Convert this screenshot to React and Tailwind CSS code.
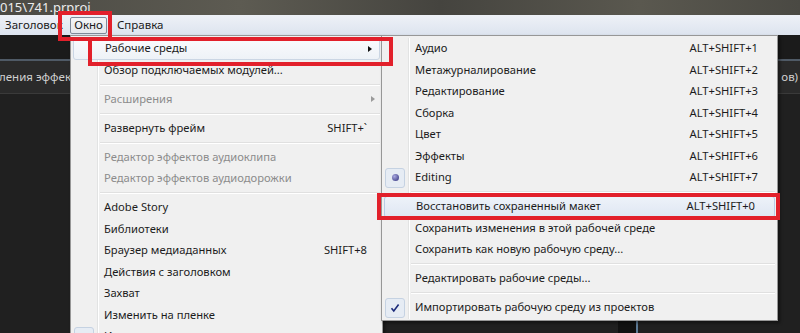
import React from 'react'

const mainItems = [
  { label: 'Рабочие среды', sub: true, active: true },
  { label: 'Обзор подключаемых модулей...' },
  'sep',
  { label: 'Расширения', sub: true, disabled: true },
  'sep',
  { label: 'Развернуть фрейм', shortcut: 'SHIFT+`' },
  'sep',
  { label: 'Редактор эффектов аудиоклипа', disabled: true },
  { label: 'Редактор эффектов аудиодорожки', disabled: true },
  'sep',
  { label: 'Adobe Story' },
  { label: 'Библиотеки' },
  { label: 'Браузер медиаданных', shortcut: 'SHIFT+8' },
  { label: 'Действия с заголовком' },
  { label: 'Захват' },
  { label: 'Изменить на пленке' },
  { label: 'Индикаторы аудио', mark: 'check' },
]

const subItems = [
  { label: 'Аудио', shortcut: 'ALT+SHIFT+1' },
  { label: 'Метажурналирование', shortcut: 'ALT+SHIFT+2' },
  { label: 'Редактирование', shortcut: 'ALT+SHIFT+3' },
  { label: 'Сборка', shortcut: 'ALT+SHIFT+4' },
  { label: 'Цвет', shortcut: 'ALT+SHIFT+5' },
  { label: 'Эффекты', shortcut: 'ALT+SHIFT+6' },
  { label: 'Editing', shortcut: 'ALT+SHIFT+7', mark: 'radio' },
  'sep',
  { label: 'Восстановить сохраненный макет', shortcut: 'ALT+SHIFT+0', hover: true },
  { label: 'Сохранить изменения в этой рабочей среде' },
  { label: 'Сохранить как новую рабочую среду...' },
  'sep',
  { label: 'Редактировать рабочие среды...' },
  'sep',
  { label: 'Импортировать рабочую среду из проектов', mark: 'check' },
]

function Mark({ type }) {
  if (!type) return null
  return (
    <div className="w-[20px] h-[20px] rounded-[3px] border border-[#c5d2e2] bg-[#e6ecf4] flex items-center justify-center">
      {type === 'radio' ? (
        <div className="w-[7px] h-[7px] rounded-full bg-[radial-gradient(circle_at_35%_35%,#a9a9e0,#2e2e7a)]" />
      ) : (
        <svg width="10" height="10" viewBox="0 0 10 10">
          <path d="M1.5 5.2 L3.8 8 L8.6 1.6" fill="none" stroke="#1b2a7a" strokeWidth="1.6" />
        </svg>
      )}
    </div>
  )
}

function Row({ item, gutter, shortcutPad }) {
  const hl = item.active || item.hover
  return (
    <div
      className={
        'flex items-center h-[21.5px] ' +
        (item.active
          ? 'mx-[2px] rounded-[3px] border border-[#cbd6e4] bg-[linear-gradient(#fafbfd,#eef2f7)]'
          : item.hover
          ? 'mx-[2px] rounded-[3px] border border-[#b9cce6] bg-[linear-gradient(#edf2f9,#dfe7f3)]'
          : '')
      }
    >
      <div
        className={
          'h-full shrink-0 flex items-center justify-center ' +
          (hl ? '' : 'border-r border-r-[#e2e3e3] shadow-[1px_0_0_#ffffff]')
        }
        style={{ width: hl ? gutter - 2 : gutter }}
      >
        <Mark type={item.mark} />
      </div>
      <div
        className={
          'flex-1 pl-[6px] text-[11.2px] whitespace-nowrap ' +
          (item.disabled ? 'text-[#8c8c8c]' : 'text-[#1c1c1c]')
        }
      >
        {item.label}
      </div>
      {item.shortcut && (
        <div className="text-[11.2px] text-[#1c1c1c] whitespace-nowrap" style={{ paddingRight: shortcutPad }}>
          {item.shortcut}
        </div>
      )}
      {item.sub && (
        <div className="pr-[7px]">
          <div
            className={
              'w-0 h-0 border-y-[3.5px] border-y-transparent border-l-[4px] ' +
              (item.disabled ? 'border-l-[#9a9a9a]' : 'border-l-[#111111]')
            }
          />
        </div>
      )}
    </div>
  )
}

function Sep({ gutter }) {
  return (
    <div className="flex h-[7.5px]">
      <div className="shrink-0 border-r border-r-[#e2e3e3] shadow-[1px_0_0_#ffffff]" style={{ width: gutter }} />
      <div className="flex-1 flex items-center pl-[2px] pr-[2px]">
        <div className="w-full h-[2px] border-t border-t-[#e0e0e0] border-b border-b-[#ffffff]" />
      </div>
    </div>
  )
}

function Menu({ items, className, gutter, shortcutPad }) {
  return (
    <div className={'absolute border border-[#979797] bg-[#f0f0f0] pt-[2px] pb-[1px] shadow-[2px_2px_3px_rgba(0,0,0,0.45)] ' + className}>
      {items.map((it, i) =>
        it === 'sep' ? <Sep key={i} gutter={gutter} /> : <Row key={i} item={it} gutter={gutter} shortcutPad={shortcutPad} />
      )}
    </div>
  )
}

export default function App() {
  return (
    <div className="relative w-[800px] h-[333px] overflow-hidden bg-[#1e1e1e] font-['Noto_Sans',sans-serif]">
      {/* title bar (blurry photo) */}
      <div className="h-[15px] bg-[linear-gradient(90deg,#4b4a44,#5d5b52_30%,#45443f_55%,#5a584f_80%,#4a4943)] flex items-center">
        <span className="text-[13px] leading-none text-[#ececec] -mt-[1px]">{'015\\741.prproj'}</span>
      </div>

      {/* menu bar */}
      <div className="h-[20px] bg-[linear-gradient(#eef1f7,#dde4ef)] flex items-center text-[11.5px] text-[#1a1a1a]">
        <span className="pl-[5px] w-[70px] overflow-hidden whitespace-nowrap">Заголовок</span>
        <span className="h-[17px] w-[37px] flex items-center justify-center border border-[#7f8a99] rounded-[2px] bg-[linear-gradient(#f4f5f7,#e4e7ec)]">
          Окно
        </span>
        <span className="ml-[10px]">Справка</span>
      </div>

      {/* dark panels behind menus */}
      <div className="h-[24px] bg-[#1b1b1b]" />
      <div className="h-[2px] bg-[#4f5a66]" />
      <div className="h-[32px] bg-[#2a2a2a] flex items-center justify-between text-[11.5px] text-[#cfcfcf]">
        <span className="-ml-[1px]">ления эффект</span>
        <span className="mr-[2px]">ов)</span>
      </div>
      <div className="h-[1px] bg-[#3a3a3a]" />
      <div className="h-full bg-[#202020] flex">
        <div className="ml-[618px] w-[20px] h-full bg-[#111111] border-r-2 border-r-[#5d7b96]" />
      </div>

      <Menu items={mainItems} className="left-[70px] top-[35px] w-[313px]" gutter={27} shortcutPad={15} />
      <Menu items={subItems} className="left-[381px] top-[35px] w-[397px]" gutter={27} shortcutPad={19} />

      {/* red annotation boxes */}
      <div className="absolute left-[58px] top-[11px] w-[54px] h-[30px] border-[4px] border-[#e2202b]" />
      <div className="absolute left-[88px] top-[37px] w-[305px] h-[29px] border-[4px] border-[#e2202b]" />
      <div className="absolute left-[377px] top-[193px] w-[403px] h-[27px] border-[4px] border-[#e2202b]" />
    </div>
  )
}
